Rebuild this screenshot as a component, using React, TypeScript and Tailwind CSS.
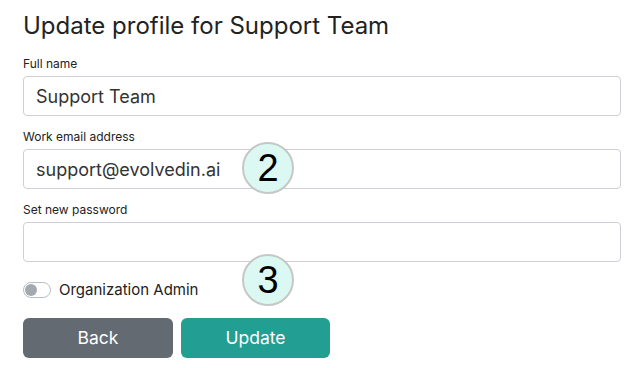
const Marker = ({ n }: { n: string }) => (
  <div className="flex h-[52px] w-[52px] items-center justify-center rounded-full border-2 border-[#c4c8c6] bg-[#dcf8f2] text-[38px] leading-none text-black font-['Liberation_Sans',sans-serif]">
    {n}
  </div>
);

export default function App() {
  return (
    <div className="relative h-[368px] w-[638px] bg-white px-[23px] pt-[10px] font-['Inter',sans-serif]">
      <h1 className="text-[24px] leading-[32px] text-[#222]">Update profile for Support Team</h1>
      <div className="mt-[14px]">
        <label className="block text-[12px] leading-[16px] text-[#222]">Full name</label>
        <div className="mt-[4px] flex h-[40px] w-[598px] items-center rounded-[4px] border border-[#cdd0d5] bg-white px-[12px] text-[18px] text-[#333]">
          Support Team
        </div>
      </div>
      <div className="mt-[13px]">
        <label className="block text-[12px] leading-[16px] text-[#222]">Work email address</label>
        <div className="mt-[4px] flex h-[40px] w-[598px] items-center rounded-[4px] border border-[#cdd0d5] bg-white px-[12px] text-[18px] text-[#333]">
          support@evolvedin.ai
        </div>
      </div>
      <div className="mt-[13px]">
        <label className="block text-[12px] leading-[16px] text-[#222]">Set new password</label>
        <div className="mt-[4px] h-[40px] w-[598px] rounded-[4px] border border-[#cdd0d5] bg-white" />
      </div>
      <div className="mt-[18px] flex h-[20px] items-center gap-[8px]">
        <div className="flex h-[16px] w-[28px] items-center rounded-full border border-[#b9bec5] bg-white px-[1px]">
          <div className="h-[12px] w-[12px] rounded-full bg-[#a4a9b0]" />
        </div>
        <span className="text-[15px] leading-[20px] text-[#222]">Organization Admin</span>
      </div>
      <div className="mt-[18px] flex gap-[8px]">
        <button className="h-[40px] w-[150px] rounded-[6px] bg-[#636a72] text-[17.5px] text-white">Back</button>
        <button className="h-[40px] w-[149px] rounded-[6px] bg-[#229e93] text-[17.5px] text-white">Update</button>
      </div>
      <div className="absolute left-[242px] top-[142px]">
        <Marker n="2" />
      </div>
      <div className="absolute left-[242px] top-[254px]">
        <Marker n="3" />
      </div>
    </div>
  );
}
